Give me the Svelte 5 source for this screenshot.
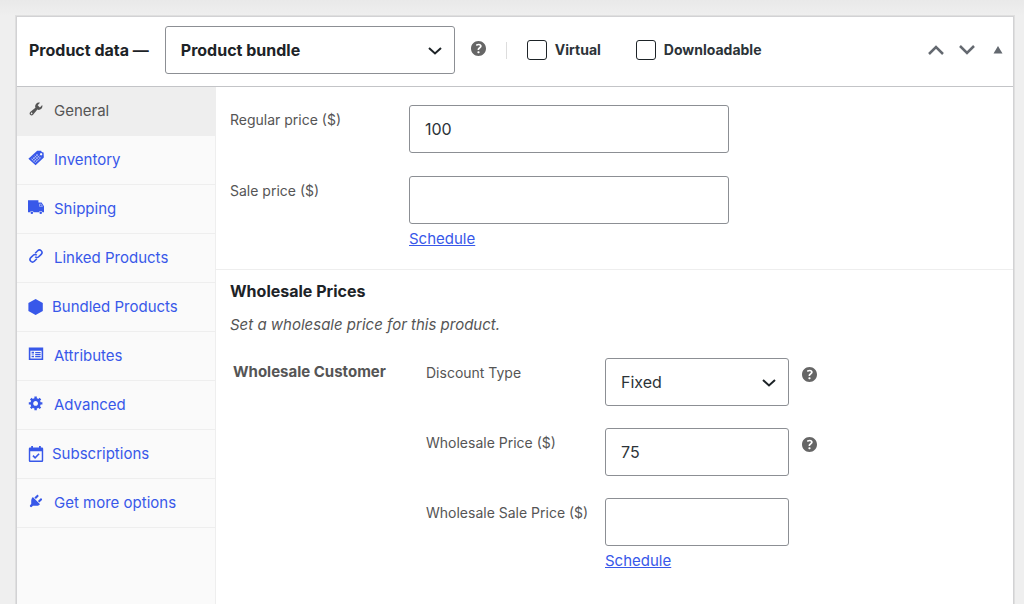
<script lang="ts">
	interface Tab {
		id: string;
		label: string;
		plugin?: boolean;
	}

	const tabs: Tab[] = [
		{ id: 'general', label: 'General' },
		{ id: 'inventory', label: 'Inventory' },
		{ id: 'shipping', label: 'Shipping' },
		{ id: 'linked', label: 'Linked Products' },
		{ id: 'bundled', label: 'Bundled Products', plugin: true },
		{ id: 'attributes', label: 'Attributes' },
		{ id: 'advanced', label: 'Advanced' },
		{ id: 'subscriptions', label: 'Subscriptions', plugin: true },
		{ id: 'more', label: 'Get more options' }
	];

	let active = $state('general');
	let productType = $state('bundle');
	let virtual = $state(false);
	let downloadable = $state(false);
	let regularPrice = $state('100');
	let salePrice = $state('');
	let discountType = $state('fixed');
	let wholesalePrice = $state('75');
	let wholesaleSalePrice = $state('');

	function selectTab(event: MouseEvent, id: string) {
		event.preventDefault();
		active = id;
	}
</script>

{#snippet help(label: string)}
	<button type="button" class="help" aria-label={label}>
		<svg viewBox="3 3 14 14" width="15" height="15" aria-hidden="true">
			<path
				d="M17 10c0-3.87-3.14-7-7-7-3.87 0-7 3.13-7 7s3.13 7 7 7c3.86 0 7-3.13 7-7zm-6.3 1.48H9.14v-.43c0-.38.08-.7.24-.98s.46-.57.88-.89c.41-.29.68-.53.81-.71.14-.18.2-.39.2-.62 0-.25-.09-.44-.28-.58-.19-.13-.45-.19-.79-.19-.58 0-1.25.19-2 .57l-.64-1.28c.87-.49 1.8-.74 2.77-.74.81 0 1.45.2 1.92.58.48.39.71.91.71 1.55 0 .43-.09.8-.29 1.11-.19.32-.57.67-1.11 1.06-.38.28-.61.49-.71.63-.1.15-.15.34-.15.57v.35zm-1.47 2.74c-.18-.17-.27-.42-.27-.73 0-.33.08-.58.26-.75s.43-.25.77-.25c.32 0 .57.09.75.26s.27.42.27.74c0 .3-.09.55-.27.72-.18.18-.43.27-.75.27-.33 0-.58-.09-.76-.26z"
			/>
		</svg>
	</button>
{/snippet}

{#snippet chevron()}
	<svg class="chevron" viewBox="0 0 14 10" width="14" height="10" aria-hidden="true">
		<path d="M1 2l6 5.500L13 2" />
	</svg>
{/snippet}

{#snippet icon(id: string)}
	<svg class="icon" viewBox="0 0 20 20" width="16" height="16" aria-hidden="true">
		{#if id === 'general'}
			<path
				d="M16.68 9.77c-1.34 1.34-3.3 1.67-4.95.99l-5.41 6.52c-.99.99-2.59.99-3.58 0s-.99-2.59 0-3.57l6.52-5.42c-.68-1.65-.35-3.61.99-4.95 1.28-1.28 3.12-1.62 4.72-1.06l-2.89 2.89 2.82 2.82 2.86-2.87c.53 1.58.18 3.39-1.08 4.65zM3.81 16.21c.4.39 1.04.39 1.43 0 .4-.4.4-1.04 0-1.43-.39-.4-1.03-.4-1.43 0-.39.39-.39 1.03 0 1.43z"
			/>
		{:else if id === 'inventory'}
			<path
				fill-rule="evenodd"
				d="M11.5 1h5l.6 1.6 2.4.6.3 6.300L9.500 19 .5 10.800zM16.400 3.800a1.500 1.500 0 1 0 .01 0z"
			/>
			<path
				class="cut"
				d="M4 10.800l5 4.800M6 9l5 4.800M8 7.200l5 4.800M10 5.400l5 4.800M5 12.400l7.500-7M7 14.200l7.500-7M9 16l7.500-7"
			/>
		{:else if id === 'shipping'}
			<path
				d="M0 1.500H13v3h4l3 4.500v7.500h-1.900a2.300 2.300 0 0 0-4.400 0H7a2.300 2.300 0 0 0-4.400 0H0z"
			/>
			<circle cx="4.800" cy="17.200" r="1.600" />
			<circle cx="15.900" cy="17.200" r="1.600" />
			<path class="cut" d="M14.400 6.400h2l1.700 2.800h-3.700z" />
		{:else if id === 'linked'}
			<g class="line">
				<path d="M9 6.600l3.100-3.100a3.100 3.100 0 0 1 4.400 4.400l-3.100 3.100a3.100 3.100 0 0 1-4.400 0" />
				<path d="M11 13.400l-3.100 3.100a3.100 3.100 0 0 1-4.400-4.400L6.600 9a3.100 3.100 0 0 1 4.400 0" />
			</g>
		{:else if id === 'bundled'}
			<path d="M9.500 0l9 4.900v10.200L9.500 20l-9-4.900V4.900z" />
		{:else if id === 'attributes'}
			<path
				fill-rule="evenodd"
				d="M1 2h18v15.500H1zM3 6v9.500h14V6zM4.500 7.200h3v2.200h-3zM9 7.500h6.800v1.600H9zM4.500 10.500h3v1h-3zM9 10h6.800v1.600H9zM4.500 12.400h3v1.600h-3zM9 12.500h6.800v1.600H9z"
			/>
		{:else if id === 'advanced'}
			<path
				fill-rule="evenodd"
				d="M18 12h-2.180c-.17.7-.44 1.350-.81 1.930l1.540 1.540-2.100 2.100-1.540-1.540c-.58.360-1.230.630-1.910.790V19H8v-2.180c-.68-.16-1.330-.43-1.910-.79l-1.540 1.540-2.120-2.120 1.540-1.540c-.36-.58-.63-1.230-.79-1.910H1V9.030h2.170c.16-.7.44-1.350.8-1.940L2.430 5.550l2.100-2.100 1.540 1.540c.58-.37 1.240-.64 1.930-.81V2h3v2.180c.68.16 1.330.43 1.910.79l1.540-1.540 2.120 2.120-1.540 1.540c.36.59.64 1.240.8 1.940H18V12zm-8.500 1.500c1.660 0 3-1.340 3-3s-1.340-3-3-3-3 1.340-3 3 1.340 3 3 3z"
			/>
		{:else if id === 'subscriptions'}
			<path
				fill-rule="evenodd"
				d="M4 0h2.200v2h7.600V0H16v2h1.500A1.500 1.500 0 0 1 19 3.500v15a1.500 1.500 0 0 1-1.500 1.500h-15A1.500 1.500 0 0 1 1 18.500v-15A1.500 1.500 0 0 1 2.500 2H4zM2.800 6.500v11.700h14.400V6.500z"
			/>
			<path class="line" d="M6.200 12l2.700 2.700 5-5" />
		{:else}
			<path
				d="M13.110 4.360L9.870 7.600 8 5.730l3.240-3.240c.35-.34 1.050-.2 1.560.32.52.51.66 1.210.31 1.550zm-8 1.770l.91-1.120 9.010 9.010-1.190.84c-.71.71-2.630 1.160-3.820 1.160H6.140L4.900 17.260c-.59.59-1.540.59-2.120 0-.59-.58-.59-1.530 0-2.120l1.240-1.240v-3.880c0-1.130.4-3.190 1.090-3.890zm7.260 3.970l3.240-3.240c.34-.35 1.040-.21 1.550.31.52.51.66 1.210.31 1.550l-3.240 3.250z"
			/>
		{/if}
	</svg>
{/snippet}

<main class="page">
	<section class="postbox">
		<header>
			<h2><label for="product-type">Product data —</label></h2>
			<div class="select type">
				<select id="product-type" bind:value={productType}>
					<option value="simple">Simple product</option>
					<option value="bundle">Product bundle</option>
				</select>
				{@render chevron()}
			</div>
			{@render help('About product types')}
			<div class="options">
				<label><input type="checkbox" bind:checked={virtual} />Virtual</label>
				<label><input type="checkbox" bind:checked={downloadable} />Downloadable</label>
			</div>
			<div class="handles">
				<button type="button" aria-label="Move up">
					<svg viewBox="0 0 18 12" width="18" height="12"><path class="arrow" d="M2 10l7-7 7 7" /></svg>
				</button>
				<button type="button" aria-label="Move down">
					<svg viewBox="0 0 18 12" width="18" height="12"><path class="arrow" d="M2 2l7 7 7-7" /></svg>
				</button>
				<button type="button" class="toggle" aria-label="Toggle panel">
					<svg viewBox="0 0 10 8" width="10" height="8"><path d="M5 0l4.500 7.500h-9z" /></svg>
				</button>
			</div>
		</header>

		<div class="body">
			<nav>
				<ul>
					{#each tabs as tab (tab.id)}
						<li>
							<a
								href={'#' + tab.id}
								class:active={active === tab.id}
								class:plugin={tab.plugin}
								onclick={(e) => selectTab(e, tab.id)}
							>
								{@render icon(tab.id)}
								<span>{tab.label}</span>
							</a>
						</li>
					{/each}
				</ul>
			</nav>

			<div class="panel">
				<div class="group">
					<div class="field">
						<label for="regular-price">Regular price ($)</label>
						<div class="control">
							<input id="regular-price" type="text" bind:value={regularPrice} />
						</div>
					</div>
					<div class="field">
						<label for="sale-price">Sale price ($)</label>
						<div class="control">
							<input id="sale-price" type="text" bind:value={salePrice} />
							<a href="#schedule">Schedule</a>
						</div>
					</div>
				</div>

				<div class="group wholesale">
					<h3>Wholesale Prices</h3>
					<p>Set a wholesale price for this product.</p>
					<div class="role">
						<h4>Wholesale Customer</h4>
						<div class="fields">
							<div class="field">
								<label for="discount-type">Discount Type</label>
								<div class="control">
									<div class="select">
										<select id="discount-type" bind:value={discountType}>
											<option value="fixed">Fixed</option>
											<option value="percentage">Percentage</option>
										</select>
										{@render chevron()}
									</div>
								</div>
								{@render help('About discount types')}
							</div>
							<div class="field">
								<label for="wholesale-price">Wholesale Price ($)</label>
								<div class="control">
									<input id="wholesale-price" type="text" bind:value={wholesalePrice} />
								</div>
								{@render help('About wholesale price')}
							</div>
							<div class="field">
								<label for="wholesale-sale-price">Wholesale Sale Price ($)</label>
								<div class="control">
									<input id="wholesale-sale-price" type="text" bind:value={wholesaleSalePrice} />
									<a href="#wholesale-schedule">Schedule</a>
								</div>
							</div>
						</div>
					</div>
				</div>
			</div>
		</div>
	</section>
</main>

<style>
	:global(body) {
		margin: 0;
		background: #f0f0f1;
	}
	.page {
		box-sizing: border-box;
		display: flex;
		flex-direction: column;
		min-height: 100vh;
		padding: 16px 10px 0 16px;
		background: linear-gradient(#e9e9e9, #efefef 16px);
		color: #555;
		font-family: Inter, 'Liberation Sans', sans-serif;
		font-size: 14px;
		line-height: 20px;
	}
	.postbox {
		flex: 1;
		display: flex;
		flex-direction: column;
		border: 1px solid #d2d2d4;
		border-bottom: 0;
		box-shadow: 0 0 0 1px #dfdfdf;
		background: #fff;
	}
	h2,
	h3,
	h4,
	p,
	ul {
		margin: 0;
		padding: 0;
	}
	h2,
	h3 {
		color: #1d2327;
		font-size: 16px;
		font-weight: 700;
	}
	button {
		display: flex;
		padding: 0;
		border: 0;
		background: none;
		cursor: pointer;
	}

	header {
		display: flex;
		align-items: center;
		padding: 9px 10px 12px 12px;
		border-bottom: 1px solid #c3c4c7;
	}
	header h2 {
		margin-right: 16px;
		white-space: nowrap;
	}
	.select {
		position: relative;
	}
	.select.type {
		width: 290px;
	}
	select,
	input[type='text'] {
		box-sizing: border-box;
		display: block;
		width: 100%;
		height: 48px;
		padding: 0 15px;
		border: 1px solid #8c8f94;
		border-radius: 3px;
		background: #fff;
		color: #2c3338;
		font-family: inherit;
		font-size: 16px;
		appearance: none;
	}
	.type select {
		font-weight: 700;
		color: #1d2327;
	}
	.chevron {
		position: absolute;
		top: 20px;
		right: 13px;
		fill: none;
		stroke: #1d2327;
		stroke-width: 2;
		pointer-events: none;
	}
	.help {
		fill: #666;
	}
	header .help {
		margin: 0 20px 4px 16px;
	}
	.options {
		display: flex;
		align-items: center;
		gap: 35px;
		color: #2c3338;
		font-weight: 700;
	}
	.options::before {
		content: '';
		width: 1px;
		height: 17px;
		margin-right: -15px;
		background: #ddd;
	}
	.options label {
		display: flex;
		align-items: center;
		gap: 8px;
	}
	input[type='checkbox'] {
		box-sizing: border-box;
		width: 20px;
		height: 20px;
		margin: 0;
		border: 1px solid #1d2327;
		border-radius: 3px;
		background: #fff;
		appearance: none;
	}
	input[type='checkbox']:checked {
		background: #3858e9;
	}
	.handles {
		display: flex;
		align-items: center;
		gap: 13px;
		margin-left: auto;
		fill: #646970;
	}
	.toggle {
		margin-left: 4px;
	}
	.arrow {
		fill: none;
		stroke: #646970;
		stroke-width: 2.5;
	}

	.body {
		flex: 1;
		display: flex;
	}
	nav {
		flex: 0 0 198px;
		border-right: 1px solid #eee;
		background: #fafafa;
		--tab-bg: #fafafa;
	}
	ul {
		list-style: none;
	}
	nav a {
		display: flex;
		align-items: center;
		gap: 10px;
		padding: 14px 11px;
		border-bottom: 1px solid #eee;
		color: #3858e9;
		font-size: 15px;
		text-decoration: none;
		white-space: nowrap;
	}
	nav a.active {
		background: #eee;
		color: #555;
	}
	nav a.plugin {
		gap: 8px;
	}
	.icon {
		flex: none;
		margin-bottom: 4px;
		overflow: visible;
		fill: currentColor;
	}
	.plugin .icon {
		margin-bottom: 0;
	}
	.icon .line {
		fill: none;
		stroke: currentColor;
		stroke-width: 2;
	}
	.icon .cut {
		fill: none;
		stroke: var(--tab-bg);
		stroke-width: 1;
		opacity: 0.6;
	}

	.panel {
		flex: 1;
		min-width: 0;
	}
	.group {
		display: flex;
		flex-direction: column;
		gap: 23px;
		padding: 18px 14px 20px;
		border-bottom: 1px solid #eee;
	}
	.field {
		display: flex;
		align-items: flex-start;
	}
	.field label {
		flex: 0 0 179px;
		padding-top: 5px;
	}
	.control {
		flex: 0 1 320px;
	}
	.control a {
		display: inline-block;
		margin-top: 5px;
		color: #3858e9;
		font-size: 15px;
	}
	.wholesale {
		display: block;
		border-bottom: 0;
		padding-top: 11px;
	}
	p {
		margin-top: 14px;
		font-size: 15px;
		font-style: italic;
	}
	.role {
		display: flex;
		margin-top: 23px;
	}
	h4 {
		flex: 0 0 193px;
		padding: 4px 0 0 3px;
		box-sizing: border-box;
		font-size: 15px;
		font-weight: 700;
	}
	.fields {
		flex: 1;
		display: flex;
		flex-direction: column;
		gap: 22px;
		margin-left: 3px;
	}
	.fields .control {
		flex-basis: 184px;
	}
	.field .help {
		margin: 9px 0 0 13px;
	}
</style>
